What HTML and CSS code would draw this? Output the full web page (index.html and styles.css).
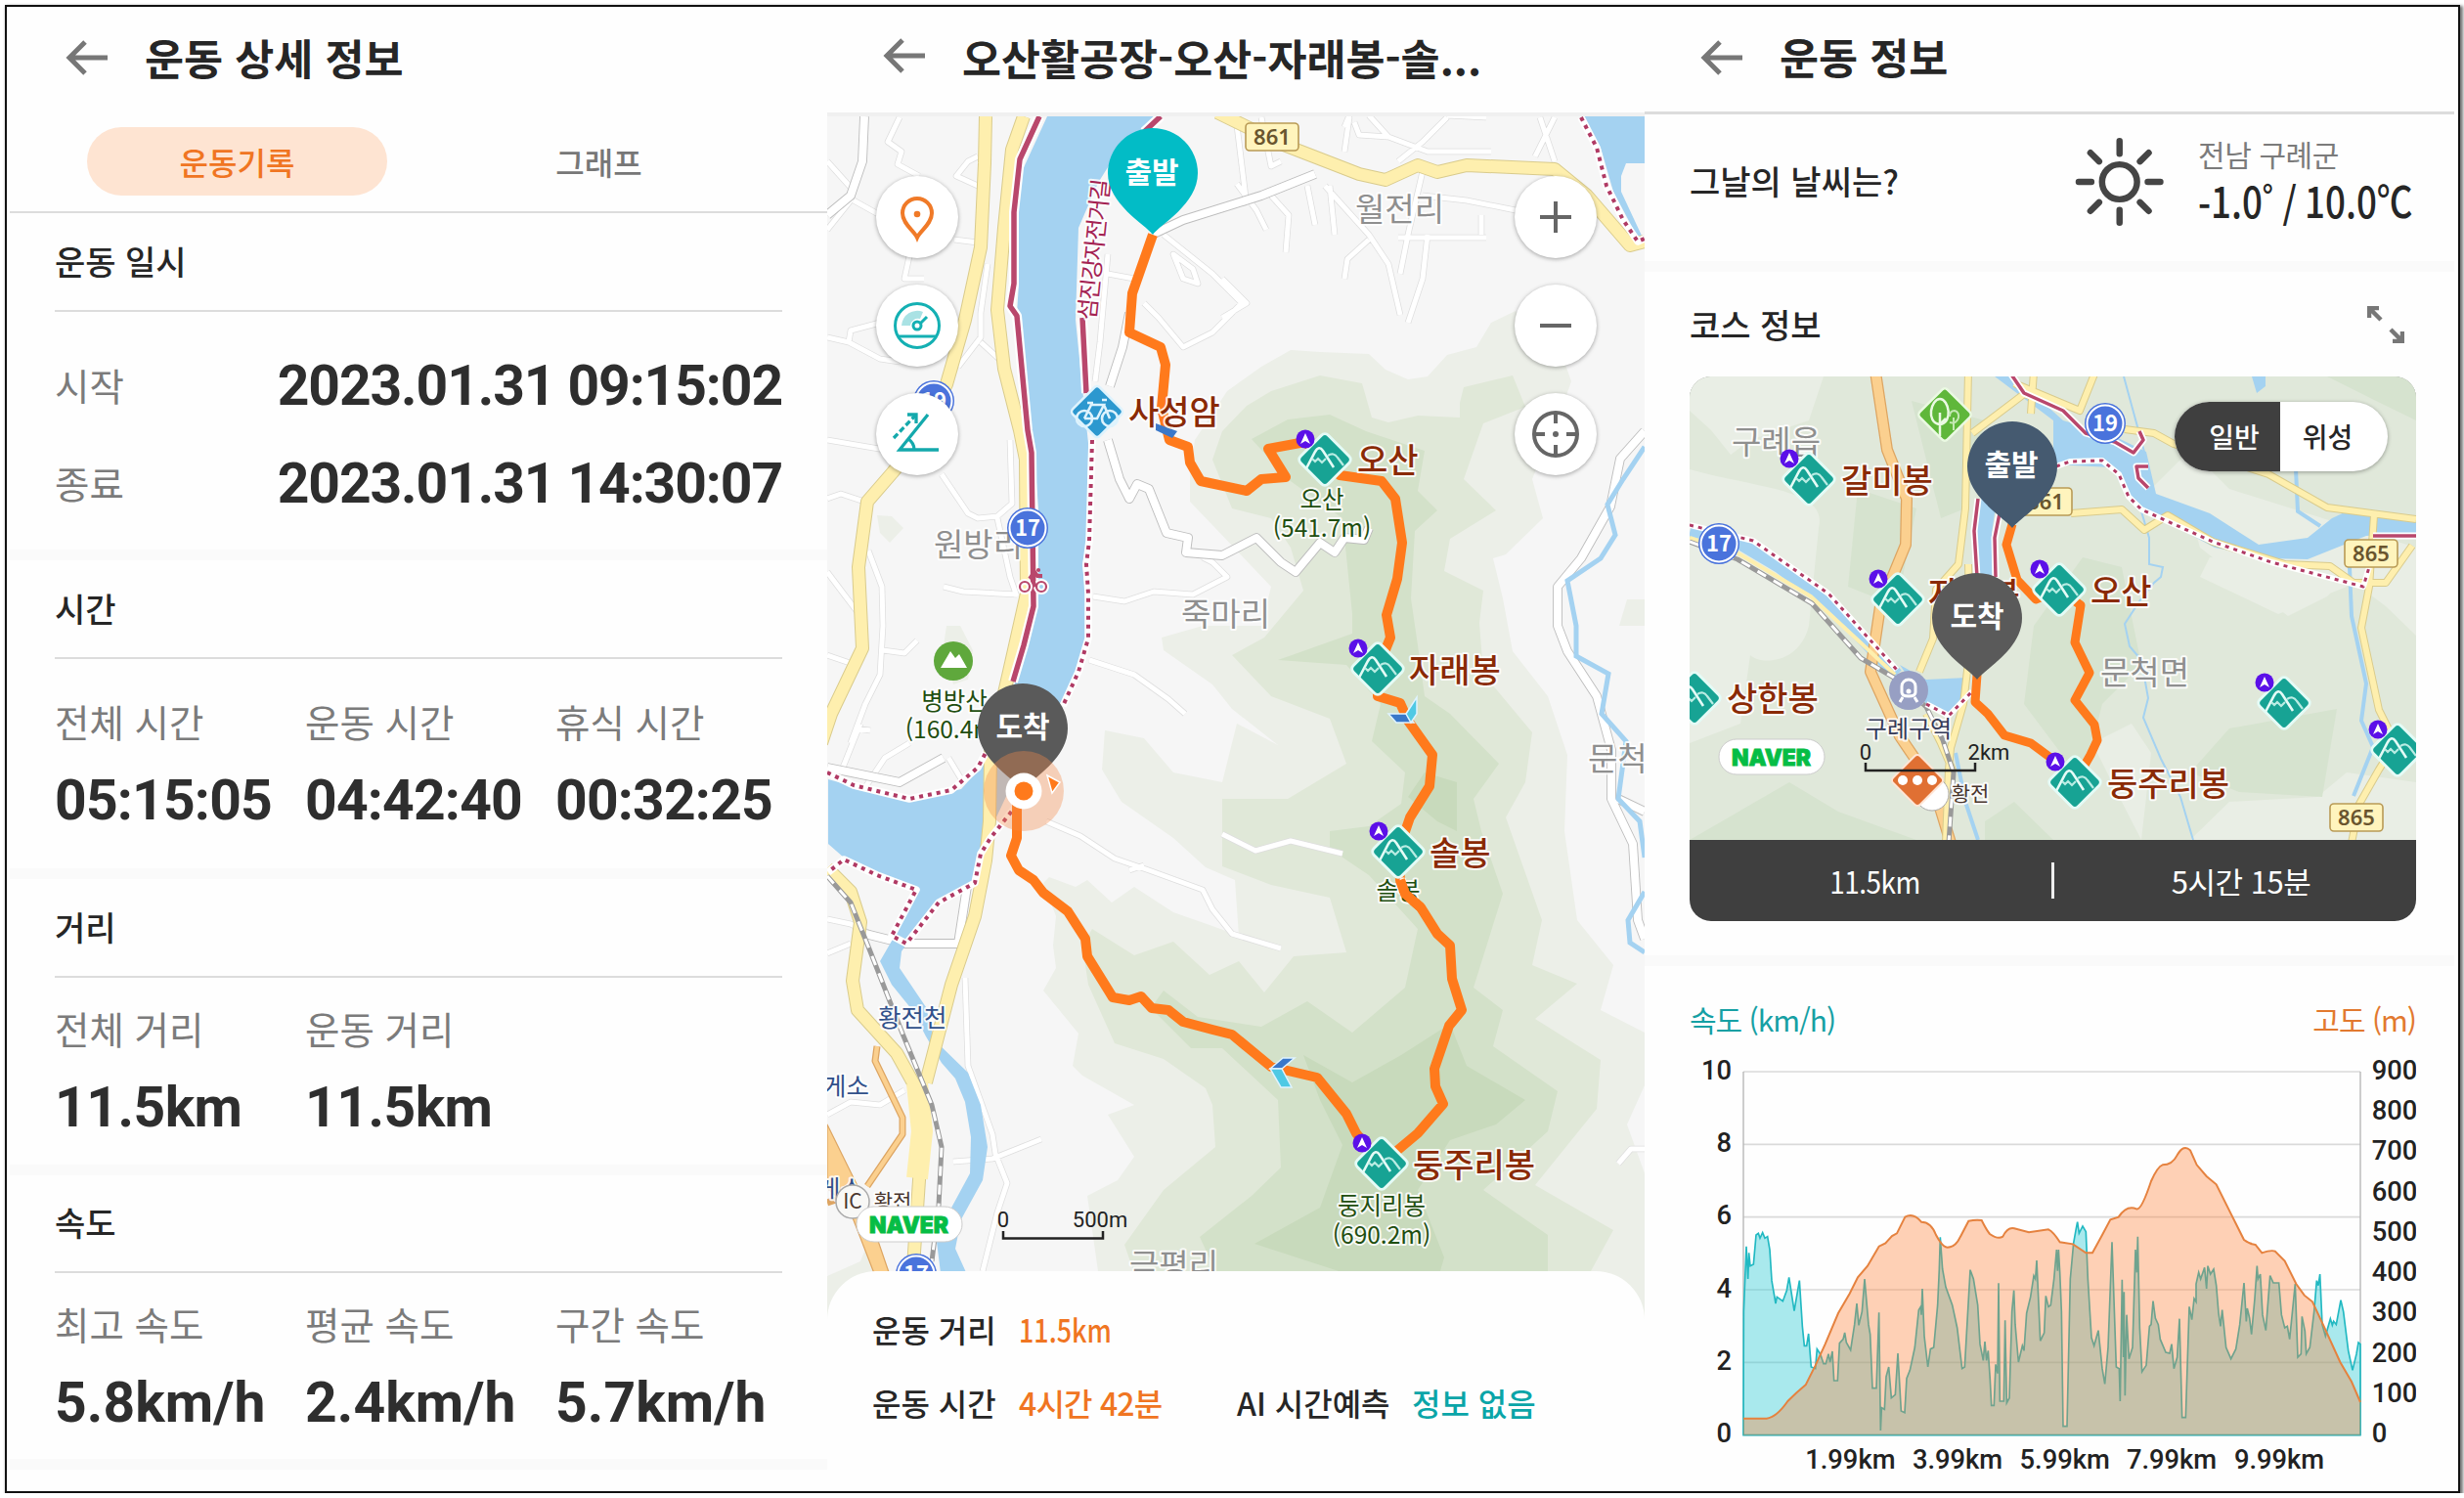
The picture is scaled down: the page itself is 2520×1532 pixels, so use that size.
FILE: index.html
```html
<!DOCTYPE html>
<html lang="ko">
<head>
	<meta charset="utf-8">
	<title>운동 정보</title>
	<link rel="stylesheet" href="styles.css">
</head>
<body>
<svg class="defs" width="0" height="0">
	<defs>
		<symbol id="back" viewBox="0 0 44 36" overflow="visible"><path d="M42 18H4M19 2L3 18L19 34" fill="none" stroke="#777" stroke-width="5"/></symbol>
		<g id="peak">
			<rect x="-20" y="-20" width="40" height="40" rx="5" transform="rotate(45)" fill="#17a394" stroke="#e4fbf6" stroke-width="3"/>
			<path d="M-19 9L-10 -8Q-6 -15 -2 -9L9 8" fill="none" stroke="#e4fbf6" stroke-width="2.600"/>
			<path d="M-13 -1L-10 2L-7 -1L-3 3L1 -1M3 -4Q9 -8 13 -2L19 6" fill="none" stroke="#b9ece3" stroke-width="2.200"/>
			<circle cx="-20" cy="-21" r="9.5" fill="#5b10e8"/>
			<path d="M-20 -27L-15 -16L-20 -19L-25 -16Z" fill="#fff"/>
		</g>
		<path id="pin" d="M0 63C-8 52 -46 32 -46 0A46 46 0 0 1 46 0C46 32 8 52 0 63Z"/>
		<g id="shield">
			<circle r="21" fill="#4a73dc"/>
			<circle r="18.5" fill="none" stroke="#fff" stroke-width="2"/>
		</g>
		<g id="plate"><rect x="-27" y="-14" width="54" height="28" rx="4" fill="#fff4bd" stroke="#b99a55" stroke-width="1.6"/></g>
		<g id="naver">
			<rect x="-54" y="-18" width="108" height="36" rx="18" fill="#fff" stroke="#ccc" stroke-width="1"/>
			<text class="logo" x="-41" y="8.5" textLength="81" lengthAdjust="spacingAndGlyphs">NAVER</text>
		</g>
		<!-- lines drawn twice: casing, then core -->
		<path id="lanes" d="M846 165L873 195L870 205L846 235M846 345L868 350L900 367L920 370M868 350L870 338L900 330M920 120L908 145L922 155L918 168L940 180M873 205L900 220M930 262L925 285L945 285M1000 190L978 180L990 165L1000 160M976 245L1000 248M1010 270L1003 320L1003 345L980 375M1003 350L1025 370M1133 260L1125 350L1120 390M1133 280L1160 285M1190 240L1240 280L1270 310L1255 325L1240 340L1210 355L1185 325L1170 310M1200 260L1220 275L1225 290L1210 285ZM1264 120L1275 210M1290 120L1300 170L1310 165M1375 130L1380 118M1375 155L1380 120M1480 120L1455 145L1430 165M1520 120L1480 118M1400 118L1420 140L1460 155L1525 155M1420 140L1390 138L1385 125M1590 120L1570 160M1575 120L1590 165M1265 188L1285 215L1295 235M1300 200L1318 220L1315 258M1337 190L1345 230M1360 190L1365 240M1355 190L1400 240L1420 270L1432 322M1400 245L1378 265L1375 285M1430 243H1520M1455 175L1440 240L1432 280M1455 200L1500 205L1550 215M1460 240L1455 285L1440 330M1515 220V240M1250 285L1275 310L1250 325M846 450L905 460M846 510L860 505L890 515M963 485L990 525L1000 530L1020 528L1035 515L1033 450M1020 530L1033 590L1040 610M965 600L985 605L1040 608M846 585L880 630M888 563L902 600L903 640L900 690L885 720L870 760M903 665L925 668L938 655M846 670L875 680M876 745L890 747M860 790L880 740M885 805L905 775L930 760M970 775L985 800M1118 610L1150 615L1180 605L1220 608L1255 590L1240 575L1230 570M1114 675L1160 690L1195 715L1212 730M1250 853L1284 870L1320 860L1373 873M1070 840L1105 855L1140 878L1175 890L1230 910L1240 930L1260 955L1310 970M1155 890L1170 885M846 1140L870 1127L900 1130L925 1115M987 1000L990 1090L1015 1160L1018 1180L1030 1210L1020 1240L1005 1300M975 1188L1015 1185L1065 1165M846 940L870 945L890 955M846 975L870 965M1655 1190L1668 1175H1682"/>
		<path id="streets" d="M884 119L882 165L870 200L846 220M1178 240L1210 225L1290 200L1345 178M1155 320L1148 355L1135 395M1133 450L1145 490L1155 510L1163 495L1175 500L1193 545L1215 550L1213 565L1250 568L1285 550L1310 575L1325 585L1350 555L1365 565L1375 550L1395 552L1400 540M846 785L920 800L965 775M1682 441L1657 469L1647 518L1617 571L1593 600V640L1603 666L1633 712L1648 767V817L1670 863L1675 941L1682 960M885 955L925 965L980 965L990 900M1655 817L1682 830"/>
		<path id="roads" d="M1008 119L1007 167L1003 253L987 327L968 393L940 450L913 483L887 513L878 580L882 663L850 730L840 760M1047 119L1035 153L1027 233L1020 317L1027 377L1043 440L1049 470L1050 607L1032 687L1013 770L1012 840L1008 880L997 937L973 1007L947 1107M1245 115L1310 147L1390 178L1417 184L1450 169L1470 176L1500 169L1590 173L1623 200L1667 251L1682 247M846 888L870 912L880 943L872 1003L877 1033L917 1077L937 1113L943 1157L940 1207L933 1310"/>
		<path id="rail" d="M846 896L870 923L890 973L923 1057L953 1130L963 1173L960 1233L953 1290"/>
		<path id="bike" d="M1063 119L1043 163L1037 217V290L1033 313L1040 323L1051 440L1055 463L1057 620L1047 660L1036 697M1187 119L1170 135M1107 325L1111 402"/>
		<path id="trail" d="M1117 450L1114 553L1111 577L1113 607V653L1103 687L1087 722M846 790L873 803L930 817L973 808L1000 785L1008 770M1040 823L1013 857L1003 873L997 903L960 923L927 965L912 957L937 910L897 895L863 879L847 892M1617 120L1633 151L1643 190L1660 225L1675 247L1682 244"/>
		<path id="roads2" d="M2013 380L2010 520L2003 577L1980 603L1977 653L1963 687M2090 408L2070 403L2017 443M2080 380L2077 423M2060 392L2127 420L2143 380M2173 439L2203 443L2223 454L2320 485L2380 519L2471 531M2118 525L2170 521L2193 542L2217 527L2263 554L2337 577L2383 579L2407 596H2440L2467 558M2428 527L2423 600L2415 642L2433 726L2450 760L2433 787L2413 822L2405 862M2013 577L2015 660L2008 720L1995 765L1993 787L1990 862M1970 730L1985 760L1998 790"/>
		<path id="rail2" d="M1728 554L1777 572L1853 617L1903 673L1937 693L1970 723L1987 757L1998 790L1993 862"/>
		<path id="bike2" d="M2055 380L2070 402L2110 420L2133 443L2163 452L2182 463L2192 450L2188 441M2197 477L2185 477L2187 489L2197 499M2427 548H2471M2023 510L2019 543L2022 590M2045 525L2040 550L2041 590"/>
		<path id="trail2" d="M1728 537L1793 553L1870 607L1940 685M1970 720L1993 732L2017 707M2103 477L2117 472L2150 471L2167 485L2177 508L2190 521L2263 554L2323 575L2417 600L2423 580"/>
	</defs>
</svg>

<div class="frame">

	<!-- record detail -->
	<section class="screen record">
		<div class="top">
			<svg class="back"><use href="#back"/></svg>
			<h1>운동 상세 정보</h1>
		</div>
		<div class="tabs">
			<a class="tab on">운동기록</a>
			<a class="tab">그래프</a>
		</div>
		<div class="block when">
			<h2>운동 일시</h2>
			<div class="line"><span class="label">시작</span><b>2023.01.31 09:15:02</b></div>
			<div class="line"><span class="label">종료</span><b>2023.01.31 14:30:07</b></div>
		</div>
		<div class="block time">
			<h2>시간</h2>
			<div class="cols">
				<div><span class="label">전체 시간</span><b>05:15:05</b></div>
				<div><span class="label">운동 시간</span><b>04:42:40</b></div>
				<div><span class="label">휴식 시간</span><b>00:32:25</b></div>
			</div>
		</div>
		<div class="block">
			<h2>거리</h2>
			<div class="cols">
				<div><span class="label">전체 거리</span><b>11.5km</b></div>
				<div><span class="label">운동 거리</span><b>11.5km</b></div>
			</div>
		</div>
		<div class="block speed">
			<h2>속도</h2>
			<div class="cols">
				<div><span class="label">최고 속도</span><b>5.8km/h</b></div>
				<div><span class="label">평균 속도</span><b>2.4km/h</b></div>
				<div><span class="label">구간 속도</span><b>5.7km/h</b></div>
			</div>
		</div>
	</section>

	<!-- course map -->
	<section class="screen course">
		<div class="top">
			<svg class="back"><use href="#back"/></svg>
			<h1>오산활공장-오산-자래봉-솔...</h1>
		</div>
		<div class="mapwrap">
			<svg class="map" viewBox="846 119 836 1240">
				<rect x="846" y="119" width="836" height="1240" fill="#f6f6f6"/>
				<!-- terrain -->
				<path fill="#ecefe8" d="M1217 487L1222 450L1255 400L1290 375L1320 358L1350 360L1400 362L1417 378L1440 388L1460 385L1480 363L1510 355L1525 330L1550 318L1600 370L1607 390L1600 410L1567 490L1578 530L1540 567L1527 571L1537 612L1547 666L1583 712L1603 772L1600 850L1613 941L1650 987L1637 1033L1682 1056V1110L1664 1150L1682 1200V1359H846V1305L880 1290L890 1265L910 1300H1123L1112 1223L1143 1207L1160 1183L1133 1140L1160 1130L1107 1100L1097 1090L1103 1057L1067 1013L1080 990L1077 967L1080 937L1067 903L1073 897L1100 907L1112 900L1137 923L1160 907L1200 933L1240 947L1267 957L1263 900L1233 887L1200 857L1147 820L1127 787L1130 747L1170 755L1200 790L1250 800L1265 740L1307 762L1260 725L1240 700L1190 665L1188 652L1230 640L1290 640L1300 600L1262 560L1217 513Z"/>
				<path fill="#ecefe8" d="M897 527L912 528L924 540L910 555L900 545ZM968 640L982 640L995 665L990 695L975 700L965 660ZM1664 613H1682V640L1656 640Z"/>
				<path fill="#e0e8d8" d="M1240 470L1250 441L1275 415L1300 400L1350 384L1393 392L1403 427L1420 432L1450 425L1493 427L1493 412L1497 396L1547 384L1560 416L1517 433L1497 490L1530 522L1483 551L1477 584L1517 604L1513 637L1517 689L1567 749L1560 800L1540 836L1577 941L1567 987L1613 1006L1570 1042L1637 1084L1633 1134L1570 1212L1650 1258L1627 1300V1359H1180L1150 1273L1190 1217L1243 1173L1240 1130L1233 1113L1190 1083L1140 1067L1113 1007L1107 967L1117 950L1160 977L1200 963L1237 997L1267 983L1293 1015L1323 978L1377 974L1360 918L1300 905L1250 886V817L1317 817L1377 781L1360 735L1300 712L1260 670L1293 652L1333 604L1320 560L1300 530L1260 520Z"/>
				<path fill="#d3e1c9" d="M1280 449L1317 429L1360 424L1397 441L1457 461L1450 502L1470 522L1447 543L1443 612L1450 660L1457 712L1483 730L1533 781L1507 817L1515 850L1537 914L1507 1010L1537 1033L1527 1070L1593 1116L1583 1157L1517 1217L1583 1263V1359H1270L1227 1265L1280 1223L1310 1194L1307 1125L1250 1072L1218 1072L1177 1031L1190 1013L1225 1040L1290 1050L1337 1024L1383 1056L1437 1010L1450 950L1400 895L1360 868V850L1400 845L1433 822L1437 790L1403 758L1412 720L1377 680L1307 675L1383 648L1383 628L1373 530L1317 490Z"/>
				<path fill="#c8dabc" d="M1457 790L1490 800V850L1470 840L1440 815ZM1333 1079L1383 1107L1433 1079L1483 1047L1500 1090L1560 1125L1530 1150L1483 1166L1450 1217L1477 1286L1470 1310H1400L1283 1272L1350 1235L1373 1171L1350 1125Z"/>
				<use href="#lanes" class="lane edge"/>
				<use href="#lanes" class="lane"/>
				<use href="#streets" class="street edge"/>
				<use href="#streets" class="street"/>
				<!-- water -->
				<path fill="#a4d2f1" d="M1071 119L1043 180L1040 217L1042 290L1040 320L1053 440L1057 453L1062 520V607L1053 653L1036 705L1005 783L983 807L930 820L847 797V863L863 877L897 893L937 907L933 917L915 957L900 983L912 1007L933 1033L947 1060L963 1087L977 1103L987 1127L993 1163L992 1200L972 1237L958 1270L963 1310H992L977 1277L983 1247L1005 1207L1010 1173L1003 1130L990 1097L955 1063L947 1030L920 990L922 973L943 943L960 923L997 903L1017 840L1050 770L1087 717L1103 680L1110 653V607L1107 577L1112 553L1113 453L1107 397L1100 327L1103 233L1123 187L1140 160L1187 119Z"/>
				<path fill="#a4d2f1" d="M1618 119H1682V167H1663L1658 180V196L1679 241H1674L1650 196L1637 151Z"/>
				<path fill="none" stroke="#a4d2f1" stroke-width="5" d="M1682 457L1660 490L1644 516L1652 547L1637 571L1603 594L1612 640V671L1645 689L1638 730L1663 758L1655 817L1677 840L1682 877M1682 912L1665 941L1667 964L1682 974"/>
				<!-- roads -->
				<g fill="none" stroke-linejoin="round">
					<path d="M897 1070L895 1085L923 1143V1160L887 1213M846 1230L870 1222" stroke="#dda562" stroke-width="7"/>
					<path d="M897 1070L895 1085L923 1143V1160L887 1213" stroke="#fbd08f" stroke-width="4.5"/>
					<path d="M846 1150L883 1225L912 1310H897L868 1235L846 1215Z" fill="#fbd08f" stroke="#dda562" stroke-width="1.2"/>
				</g>
				<use href="#roads" class="road edge"/>
				<use href="#roads" class="road"/>
				<path d="M938 1108L943 1157L938 1205" fill="none" stroke="#feefae" stroke-width="22"/>
				<use href="#rail" class="rail"/>
				<use href="#rail" class="rail dash"/>
				<!-- bike paths -->
				<use href="#bike" class="bike edge"/>
				<use href="#bike" class="bike"/>
				<use href="#trail" class="trail edge"/>
				<use href="#trail" class="trail"/>
				<!-- course -->
				<path class="route" d="M1179 240L1165 280L1158 300L1155 340L1187 355L1192 373L1188 417L1196 450L1215 457L1217 473L1228 492L1275 502L1290 490L1315 488L1297 459L1335 452L1370 486L1413 492L1427 510L1434 555L1429 592L1418 629L1422 652L1409 684V712L1432 719L1440 737L1465 772L1462 804L1442 836L1430 871L1432 900L1437 914L1453 928L1470 955L1483 967L1485 1001L1495 1033L1482 1049L1467 1093L1468 1111L1476 1129L1450 1159L1413 1190L1387 1159L1377 1139L1347 1102L1300 1091L1260 1058L1240 1053L1210 1045L1195 1033L1178 1031L1167 1019L1155 1023L1138 1020L1112 978L1110 960L1092 932L1067 913L1057 900L1042 890L1034 875L1040 857L1040 815"/>
				<g stroke="#dff3ff" stroke-width="1.500">
					<path d="M1420 730H1438L1446 739H1428Z" fill="#3a78c9"/><path d="M1438 730L1449 713V730L1443 739Z" fill="#4fc9e4"/>
					<path d="M1299 1093L1312 1082H1324L1311 1093Z" fill="#3a78c9"/><path d="M1299 1093H1311L1321 1112H1310Z" fill="#4fc9e4"/>
				</g>
				<path d="M1182 433L1204 441L1199 448L1182 440Z" fill="#3a78c9"/>
				<!-- names -->
				<g class="area">
					<text x="955" y="569">원방리</text><text x="1386" y="226">월전리</text><text x="1208" y="640">죽마리</text><text x="1624" y="788">문척</text><text x="1155" y="1306">금평리</text>
				</g>
				<g class="hill">
					<text x="1352" y="520">오산</text><text x="1352" y="549">(541.7m)</text><text x="1430" y="920">솔봉</text><text x="1413" y="1242">둥지리봉</text><text x="1413" y="1272">(690.2m)</text><text x="976" y="726">병방산</text><text x="976" y="755">(160.4m)</text>
				</g>
				<path d="M1432 900L1437 914L1453 928" class="route"/>
				<g class="blue"><text x="898" y="1050">황전천</text><text x="842" y="1120">게소</text><text x="836" y="1225">게스</text></g>
				<text class="bikename" transform="translate(1120 328) rotate(-84)" textLength="145">섬진강자전거길</text>
				<circle cx="872" cy="1229" r="17" fill="#f8f8f6" stroke="#aaa" stroke-width="1.5"/><text class="ic" x="872" y="1236">IC</text>
				<text class="ic halo" x="913" y="1236">황전</text>
				<circle cx="975" cy="676" r="20" fill="#5fa83c"/><path d="M962 683L972 666L977 673L981 669L989 683Z" fill="#fff"/>
				<g fill="none" stroke="#fff" stroke-width="6"><circle cx="1048" cy="600" r="5"/><circle cx="1065" cy="600" r="5"/></g>
				<g fill="none" stroke="#b9476c" stroke-width="2.2"><circle cx="1048" cy="600" r="5"/><circle cx="1065" cy="600" r="5"/><path d="M1053 592L1058 585L1061 589H1066M1055 591L1059 600" stroke-width="4"/><circle cx="1062" cy="583" r="1"/></g>
				<use href="#plate" x="1301" y="140"/><text class="no" x="1301" y="148">861</text>
				<use href="#shield" x="1051" y="540"/><text class="route-no" x="1051" y="548">17</text>
				<use href="#shield" x="955" y="410"/><text class="route-no" x="955" y="418">19</text>
				<use href="#shield" x="937" y="1303"/><text class="route-no" x="937" y="1311">17</text>
				<!-- markers -->
				<g transform="translate(1122 421)"><rect x="-19.5" y="-19.5" width="39" height="39" rx="4" transform="rotate(45)" fill="#2c98cf" stroke="#def3fd" stroke-width="2.5"/>
					<g fill="none" stroke="#def3fd" stroke-width="2.6"><circle cx="-13" cy="7" r="8"/><circle cx="13" cy="7" r="8"/><path d="M-13 7L-6 -7H7L0 7H-13M7 -7L13 7M-10 -9H-4M5 -12H10"/></g></g>
				<use href="#peak" x="1355" y="470"/><use href="#peak" x="1409" y="684"/><use href="#peak" x="1430" y="871"/><use href="#peak" x="1413" y="1190"/>
				<g class="peakname"><text x="1154" y="434">사성암</text><text x="1388" y="483">오산</text><text x="1441" y="698">자래봉</text><text x="1462" y="885">솔봉</text><text x="1445" y="1204">둥주리봉</text></g>
				<use href="#pin" x="1179" y="177" fill="#02bcc6"/><text class="pin-text" x="1178" y="187">출발</text>
				<use href="#pin" x="1046" y="745" fill="#5a5a5a"/><text class="pin-text" x="1046" y="754">도착</text>
				<circle cx="1047" cy="809" r="41" fill="#f58a4a" fill-opacity=".36"/>
				<circle cx="1047" cy="809" r="18.5" fill="#fff"/><circle cx="1047" cy="809" r="9.5" fill="#ff7a1c"/>
				<path d="M1071 793L1084 800L1076 811Z" fill="#ff7a1c" stroke="#fff" stroke-width="1.5"/>
				<use href="#naver" x="930" y="1252"/>
				<g class="scale"><text x="1026" y="1255">0</text><text x="1125" y="1255">500m</text><path d="M1026 1259V1266.500H1128V1259"/></g>
			</svg>
			<div class="tools left">
				<span class="tool"><svg viewBox="-30 -30 60 60"><path d="M0 21C-3 14 -15 7 -15 -4A15 15 0 0 1 15 -4C15 7 3 14 0 21Z" fill="none" stroke="#f07a28" stroke-width="4"/><circle cy="-3" r="3.3" fill="#f07a28"/></svg></span>
				<span class="tool"><svg viewBox="-30 -30 60 60"><g fill="none" stroke="#14b0b3" stroke-width="3"><circle r="22.500"/><path d="M-20 11H20M3 -2L10 -9"/><circle r="4"/></g><path d="M-16 0A16 16 0 0 1 6 -14L3 -7A8 8 0 0 0 -7 0Z" fill="#a9e2e4"/></svg></span>
				<span class="tool"><svg viewBox="-30 -30 60 60"><g fill="none" stroke="#14a9ac" stroke-width="3.300"><path d="M11 -20L-18 16H22M-9 5Q-3 9 -3 16"/><path d="M-24 4L-2 -19" stroke-dasharray="6 3"/><path d="M-10 -20H-1V-11"/></g></svg></span>
			</div>
			<div class="tools right">
				<span class="tool"><svg viewBox="-30 -30 60 60"><path d="M-16 0H16M0 -16V16" stroke="#666" stroke-width="4"/></svg></span>
				<span class="tool"><svg viewBox="-30 -30 60 60"><path d="M-16 0H16" stroke="#666" stroke-width="4"/></svg></span>
				<span class="tool"><svg viewBox="-30 -30 60 60"><g fill="none" stroke="#666" stroke-width="4"><circle r="22"/><path d="M0 -22V-11M0 22V11M-22 0H-11M22 0H11"/></g><circle r="3" fill="#666"/></svg></span>
			</div>
		</div>
		<div class="sheet">
			<p><span>운동 거리</span><em class="km">11.5km</em></p>
			<p><span>운동 시간</span><em class="w">4시간 42분</em><span class="ai">AI 시간예측</span><i>정보 없음</i></p>
		</div>
	</section>

	<!-- summary -->
	<section class="screen info">
		<div class="top">
			<svg class="back"><use href="#back"/></svg>
			<h1>운동 정보</h1>
		</div>
		<div class="weather">
			<h2>그날의 날씨는?</h2>
			<svg class="sun" viewBox="-46 -46 92 92"><g fill="none" stroke="#454545" stroke-width="6.500" stroke-linecap="round"><circle r="18"/><path d="M0 -42V-29M0 42V29M-42 0H-29M42 0H29M-30 -30L-21 -21M30 -30L21 -21M-30 30L-21 21M30 30L21 21"/></g></svg>
			<div class="temps"><span>전남 구례군</span><strong>-1.0˚ / 10.0℃</strong></div>
		</div>
		<div class="coursehead">
			<h2>코스 정보</h2>
			<svg class="expand" viewBox="0 0 38 38"><path d="M2 12V2H12M3 3L14 14M36 26V36H26M35 35L24 24" fill="none" stroke="#777" stroke-width="4.500"/></svg>
		</div>
		<div class="card">
			<svg class="minimap" viewBox="1728 385 743 474">
				<rect x="1728" y="385" width="743" height="474" fill="#e0e8da"/>
				<path fill="#e9eee5" d="M1728 385H1865L1850 430L1790 450L1770 465L1750 440L1728 420ZM1728 480C1800 500 1870 500 1860 540L1850 640C1840 680 1800 680 1790 670L1780 740L1728 760ZM2190 510L2240 525L2250 560L2340 630L2380 610L2400 590L2440 620L2471 650V560L2280 500L2240 460ZM2380 560L2320 575L2260 570L2250 590L2330 628L2400 600ZM2140 760L2180 740L2200 770L2190 859L2170 820ZM2240 859L2280 820L2370 815L2400 790L2471 800V859Z"/>
				<path fill="#d6e3cf" d="M1955 410L2030 430L2010 520L1985 530L1970 470ZM1900 500L1960 520L1940 620L1890 600ZM2130 570L2170 580L2190 680L2150 720L2130 800L2070 720L2080 640ZM2240 790L2280 745L2390 725L2375 815L2290 810ZM1728 859L1830 800L1880 830L1960 859ZM2380 385H2471V430L2430 410ZM2030 840L2060 820L2100 859H2030Z"/>
				<g fill="none" stroke="#a4d2f1">
					<path d="M2172 385L2193 462M2190 523L2198 550V577L2212 580L2210 590L2203 596L2188 615L2173 638L2178 661L2190 675L2197 714L2192 734L2210 776L2230 815L2243 859" stroke-width="2"/>
					<path d="M2403 580L2405 630L2420 699L2415 737L2427 764L2407 814M2348 480L2350 523L2373 538M2000 770L2010 820L2023 859" stroke-width="4"/>
					<path d="M1728 545L1780 556L1820 580L1870 617L1940 690" stroke-width="13"/>
					<path d="M2034 510L2029 545L2030 600" stroke-width="16"/>
				</g>
				<path fill="#a4d2f1" d="M2040 385H2060L2110 430L2160 445L2195 462L2205 505L2260 525L2310 557L2360 550L2385 530L2400 523L2471 533V545L2420 548L2360 572L2320 571L2265 560L2190 520L2175 508L2160 478L2100 475V430ZM1943 680L1970 695L2012 693V715L1997 730L1970 720ZM2303 385H2317V395L2308 402Z"/>
				<g fill="none" stroke-linejoin="round">
					<path d="M1918 380L1930 460L1950 510L1949 557L1923 620L1913 687L1943 753L1977 803L1995 862" stroke="#dda562" stroke-width="12"/>
					<path d="M1918 380L1930 460L1950 510L1949 557L1923 620L1913 687L1943 753L1977 803L1995 862" stroke="#fbd08f" stroke-width="9.500"/>
					<path d="M1728 550L1776 565L1852 610L1938 690" stroke="#feefae" stroke-width="4"/>
				</g>
				<g class="thin">
					<use href="#roads2" class="road edge"/>
					<use href="#roads2" class="road"/>
					<use href="#rail2" class="rail"/>
					<use href="#rail2" class="rail dash"/>
					<use href="#bike2" class="bike edge"/>
					<use href="#bike2" class="bike"/>
					<use href="#trail2" class="trail edge"/>
					<use href="#trail2" class="trail"/>
					<path class="route" d="M2058 536L2052 557L2063 593L2082 613L2106 603L2128 619L2122 657L2137 688L2122 716L2142 741L2145 757L2138 772L2122 800L2100 777L2077 760L2050 752L2033 730L2020 718L2022 690"/>
				</g>
				<g class="area"><text x="1771" y="464">구례읍</text><text x="2148" y="700">문척면</text></g>
				<use href="#plate" x="2092" y="513"/><text class="no" x="2092" y="521">861</text>
				<use href="#plate" x="2425" y="566"/><text class="no" x="2425" y="574">865</text>
				<use href="#plate" x="2410" y="836"/><text class="no" x="2410" y="844">865</text>
				<use href="#shield" x="1758" y="556"/><text class="route-no" x="1758" y="564">17</text>
				<use href="#shield" x="2153" y="433"/><text class="route-no" x="2153" y="441">19</text>
				<circle cx="1952" cy="706" r="20" fill="#979fc3"/><g fill="none" stroke="#fff" stroke-width="3"><path d="M1945 708V702A7 7 0 0 1 1959 702V708Q1959 712 1952 712Q1945 712 1945 708M1946 713L1943 718M1958 713L1961 718"/></g><circle cx="1952" cy="707" r="2.500" fill="#fff"/>
				<circle cx="1976" cy="812" r="17" fill="#fff" stroke="#aaa"/>
				<rect x="-19.500" y="-19.500" width="39" height="39" rx="4" transform="translate(1961 798) rotate(45)" fill="#e07033" stroke="#ffe5d5" stroke-width="2"/><g fill="#fff"><circle cx="1946" cy="798" r="5"/><circle cx="1961" cy="798" r="5"/><circle cx="1976" cy="798" r="5"/></g>
				<g transform="translate(1989 424)"><rect x="-20" y="-20" width="40" height="40" rx="4" transform="rotate(45)" fill="#5fb73a" stroke="#eaf9e2" stroke-width="2.500"/><path d="M-5 22V-2M-5 10C-20 8 -14 -16 -5 -16C4 -16 9 8 -5 10M-5 10L1 4" fill="none" stroke="#eaf9e2" stroke-width="2.500"/><path d="M5 8C15 11 17 -3 10 -4Q5 -4 5 2M9 16V3" fill="none" stroke="#c4e8b3" stroke-width="2"/></g>
				<use href="#peak" x="1850" y="490"/><use href="#peak" x="1941" y="613"/><use href="#peak" x="1733" y="714"/><use href="#peak" x="2106" y="603"/><use href="#peak" x="2122" y="800"/><use href="#peak" x="2336" y="719"/><use href="#peak" x="2452" y="767"/>
				<g class="peakname"><text x="1883" y="504">갈미봉</text><text x="1972" y="620">자래봉</text><text x="1766" y="727">상한봉</text><text x="2138" y="617">오산</text><text x="2155" y="814">둥주리봉</text></g>
				<text class="station" x="1952" y="754">구례구역</text><text class="ic halo" x="2015" y="819">황전</text>
				<use href="#pin" x="2058" y="477" fill="#455a70"/><text class="pin-text" x="2057" y="486">출발</text>
				<use href="#pin" x="2022" y="632" fill="#5a5a5a"/><text class="pin-text" x="2022" y="641">도착</text>
				<use href="#naver" x="1812" y="774"/>
				<g class="scale"><text x="1908" y="777">0</text><text x="2034" y="777">2km</text><path d="M1908 780V788H2020V780"/></g>
			</svg>
			<div class="switch"><span class="on">일반</span><span>위성</span></div>
			<div class="total"><span class="dist"><i>11.5km</i></span><span>5시간 15분</span></div>
		</div>
		<div class="graph">
			<div class="legend"><span>속도 (km/h)</span><span class="alt">고도 (m)</span></div>
			<!-- three units to the pixel -->
			<svg class="chart" viewBox="54 180 2229 1320">
				<path d="M219 264H2112M219 487H2112M219 710H2112M219 933H2112M219 1156H2112M219 1379H2112" stroke="#dadada" stroke-width="5"/>
				<path d="M219 264V1379M2112 264V1379" stroke="#b5b5b5" stroke-width="4"/>
				<path id="speed" fill="#2bcbd4" fill-opacity=".4" stroke="#22b9c2" stroke-width="5" d="M219 1379L220 1000L228 800L233 900L236 820L240 860L250 855L258 765L265 760L270 775L278 758L285 775L293 770L300 810L306 905L318 975L322 955L340 968L352 935L359 895L375 998L391 905L400 1045L406 1105H413L419 1068L427 1170L440 1175L445 1115L455 1130L465 1160L472 1160L480 1130L485 1155L492 1122L497 1212H508L514 1097L525 1085L530 1065L535 1095L548 1118L560 1040L567 975L573 1042L583 1000L591 900L603 1040L608 1070L615 1235H627L635 1003L640 1365L643 1295L652 1300L657 1200L665 1170L673 1265L685 1255L693 1128L703 1305L714 1310L720 1205L730 1180L745 1110L757 995L763 985L765 1010L768 930L774 1075L785 1170L793 1115L803 1110L815 980L820 870L823 772L830 870L840 925L860 980L875 1050L890 1175L898 1170L915 872L925 900L938 980L945 1100L955 1150L960 1092L965 1150L970 1120L976 1210L980 1288H988L993 1162L999 1190L1002 913L1006 1275H1018L1022 1027L1027 1280L1035 1265L1043 1000L1049 935L1053 1040L1063 1155L1075 1105L1080 1120L1088 1005L1100 955L1110 890L1115 900L1119 843L1130 1090L1142 1065L1147 952L1155 985L1162 980L1172 900L1180 810L1183 875L1186 810L1190 880L1195 1000L1200 1352H1212L1222 900L1232 790L1240 745L1244 725L1249 760L1260 738L1270 755L1276 900L1287 1080L1295 1105L1308 1058L1320 1175L1328 1222L1338 1110L1350 787L1363 1170L1372 1175L1375 1275L1381 902L1385 1140L1387 940L1390 1258L1395 1010L1402 1145L1413 1110L1422 810L1426 880L1429 770L1435 1050L1442 1185L1455 1165L1465 1045L1470 1040L1476 968L1483 1020L1492 1040L1498 1085L1515 1125L1527 1128L1533 1100L1540 1175L1550 1140L1557 1022L1565 1325H1576L1587 985L1595 1025L1602 960L1608 970V915L1616 880L1622 900L1634 865L1640 930L1644 860L1652 885L1662 870L1670 920L1677 1005L1683 1045L1688 995L1700 1110L1715 1145L1730 1115L1742 1040L1755 912L1762 1030L1765 990L1772 1020L1778 1070L1788 960L1795 860L1798 900L1805 885L1812 1010L1822 1058L1835 890L1845 912H1862L1870 1010L1880 1050L1888 1045L1895 1085L1912 915L1920 1140L1930 1130L1933 1015L1942 1060L1946 1130L1957 1110L1970 1000L1978 905L1983 920L1988 885L1995 1040L2005 1075L2020 1022L2026 1042L2030 1030L2038 1040L2052 965L2060 1000L2075 1120L2088 1180L2100 1130L2106 1095L2112 1100V1379Z"/>
				<path fill="#ff7c2e" fill-opacity=".35" d="M219 1328H290Q320 1325 355 1275Q380 1250 410 1225L440 1165L470 1100L510 1005L545 945L570 895L600 860L635 800L655 790L675 768L690 760L715 710Q740 695 765 725Q795 725 810 765Q830 803 845 803Q870 803 885 770L910 722Q930 718 950 720Q965 750 975 762Q1000 780 1015 770Q1030 740 1050 745L1095 757L1155 748Q1170 755 1190 787L1230 793L1270 820H1290L1320 765L1345 718L1370 710Q1395 672 1425 685Q1440 690 1470 600Q1490 555 1505 550Q1535 550 1550 520Q1570 485 1590 505L1610 550L1640 585L1670 610L1715 700L1755 780Q1770 792 1790 795L1810 820Q1840 810 1850 815L1880 845L1915 915L1940 950L1965 970L2000 1045L2050 1155L2085 1215L2112 1278V1379H219Z"/>
				<path fill="none" stroke="#e5823f" stroke-width="6" d="M219 1328H290Q320 1325 355 1275Q380 1250 410 1225L440 1165L470 1100L510 1005L545 945L570 895L600 860L635 800L655 790L675 768L690 760L715 710Q740 695 765 725Q795 725 810 765Q830 803 845 803Q870 803 885 770L910 722Q930 718 950 720Q965 750 975 762Q1000 780 1015 770Q1030 740 1050 745L1095 757L1155 748Q1170 755 1190 787L1230 793L1270 820H1290L1320 765L1345 718L1370 710Q1395 672 1425 685Q1440 690 1470 600Q1490 555 1505 550Q1535 550 1550 520Q1570 485 1590 505L1610 550L1640 585L1670 610L1715 700L1755 780Q1770 792 1790 795L1810 820Q1840 810 1850 815L1880 845L1915 915L1940 950L1965 970L2000 1045L2050 1155L2085 1215L2112 1278"/>
				<g class="axis end"><text x="183" y="287">10</text><text x="183" y="510">8</text><text x="183" y="733">6</text><text x="183" y="956">4</text><text x="183" y="1179">2</text><text x="183" y="1402">0</text></g>
				<g class="axis"><text x="2147" y="287">900</text><text x="2147" y="411">800</text><text x="2147" y="535">700</text><text x="2147" y="659">600</text><text x="2147" y="783">500</text><text x="2147" y="907">400</text><text x="2147" y="1030">300</text><text x="2147" y="1155">200</text><text x="2147" y="1278">100</text><text x="2147" y="1402">0</text></g>
				<g class="axis mid"><text x="547" y="1483">1.99km</text><text x="876" y="1483">3.99km</text><text x="1205" y="1483">5.99km</text><text x="1533" y="1483">7.99km</text><text x="1863" y="1483">9.99km</text></g>
			</svg>
		</div>
	</section>
</div>
</body>
</html>
```
FILE: styles.css
```css
html, body { margin: 0; padding: 0; }
body { background-color: #fff; font-family: "Noto Sans CJK KR", sans-serif; color: #262626; }
h1, h2, p { margin: 0; font-weight: 500; }
svg { display: block; }
.defs { position: absolute; }

.frame {
	box-sizing: border-box;
	width: 2511px;
	height: 1522px;
	margin: 5px 0 0 5px;
	padding-left: 3px;
	border: 2px solid #111;
	box-shadow: 2px 2px 3px 1px #777;
	display: grid;
	grid-template-columns: 836px 836px 828px;
	background-color: #fefefe;
	overflow: hidden;
}
.screen { height: 1518px; overflow: hidden; }

/* title bars */
.top { box-sizing: border-box; height: 108px; display: flex; align-items: center; padding-left: 58px; }
.top h1 { font-size: 43.5px; font-weight: 700; line-height: 60px; padding-bottom: 5px; }
.back { width: 44px; height: 36px; margin: 0 36px 4px 0; overflow: visible; }
h2 { font-size: 34px; }

/* record */
.tabs { display: flex; gap: 63px; padding: 15px 0 16px 79px; border-bottom: 2px solid #dcdcdc; }
.tab { width: 307px; height: 70px; border-radius: 35px; text-align: center; font-size: 32px; font-weight: 500; line-height: 70px; color: #777; }
.tab.on { background-color: #fee4d2; color: #f07522; }
.block { box-sizing: border-box; height: 303px; padding: 0 46px; border-bottom: 11px solid #fafafa; }
.block h2 { height: 99px; line-height: 98px; border-bottom: 2px solid #dcdcdc; }
.when { height: 355px; }
.time { height: 326px; }
.time .cols { padding-top: 26px; }
.speed { height: 301px; }
.speed h2 { height: 98px; line-height: 96px; }
.label { font-size: 38.5px; font-weight: 400; color: #7b7b7b; line-height: 74px; padding-bottom: 4px; display: block; }
.block b { font-family: Roboto, sans-serif; font-size: 57px; line-height: 82px; letter-spacing: -1.1px; color: #2e2e2e; display: block; white-space: nowrap; }
.time b { letter-spacing: -.8px; }
.block:not(.when):not(.time) b { letter-spacing: -.5px; }
.record .speed b { letter-spacing: .1px !important; }
.line { display: flex; justify-content: space-between; align-items: center; height: 100px; }
.line:nth-child(2) { padding-top: 26px; }
.cols { display: grid; grid-template-columns: 256px 256px 256px; padding-top: 14px; }

/* course map */
.course .top { height: 112px; padding-bottom: 4px; border-bottom: 4px solid #f0f0f0; }
.course .top h1 { padding-bottom: 1px; }
.mapwrap { position: relative; height: 1181px; }
.map { width: 836px; height: 1240px; }
.tools { position: absolute; top: 61px; display: flex; flex-direction: column; gap: 27px; }
.tools.left { left: 50px; }
.tools.right { right: 49px; }
.tool { width: 84px; height: 84px; border-radius: 50%; background-color: #fff; box-shadow: 0 1px 4px rgba(0, 0, 0, .35); display: flex; align-items: center; justify-content: center; }
.tool svg { width: 60px; height: 60px; }
.sheet { position: relative; height: 225px; box-sizing: border-box; padding: 22px 46px; border-radius: 50px 50px 0 0; background-color: #fefefe; }
.sheet p { display: flex; height: 75px; line-height: 75px; font-size: 32px; }
.sheet span { width: 150px; }
.sheet em { font-style: normal; color: #f07522; letter-spacing: -.8px; }
.sheet i { font-style: normal; color: #0aa5a8; }
.sheet em.w { width: 223px; }
.sheet em.km { letter-spacing: 0; transform: scaleX(.84); transform-origin: left; }
.sheet .ai { width: 179px; }

.lane, .street, .road, .rail, .bike, .trail { fill: none; stroke-linejoin: round; }
.lane { stroke: #fff; stroke-width: 5; }
.lane.edge { stroke: #dedede; stroke-width: 6.5; }
.street { stroke: #fff; stroke-width: 8; }
.street.edge { stroke: #bdbdbd; stroke-width: 9.8; }
.road { stroke: #feefae; stroke-width: 12; }
.road.edge { stroke: #d9cb8c; stroke-width: 14; }
.rail { stroke: #999; stroke-width: 5; }
.rail.dash { stroke: #fff; stroke-width: 3; stroke-dasharray: 10 9; }
.bike { stroke: #b9476c; stroke-width: 5.5; }
.bike.edge { stroke: #fff; stroke-width: 10; }
.trail { stroke: #b03a64; stroke-width: 4; stroke-dasharray: 4 5; }
.trail.edge { stroke: #fff; stroke-width: 7.5; stroke-dasharray: none; }
.route { fill: none; stroke: #ff7a1c; stroke-width: 10; stroke-linejoin: round; }
.thin .road { stroke-width: 6; }
.thin .road.edge { stroke-width: 8; }
.thin .bike { stroke-width: 3.5; }
.thin .bike.edge { stroke-width: 7; }
.thin .trail { stroke-width: 3; }
.thin .trail.edge { stroke-width: 6; }
.thin .route { stroke-width: 9; }

.area { font-size: 33px; fill: #8f8f8f; }
.hill { font-size: 24.5px; fill: #1f4e10; text-anchor: middle; }
.blue { font-size: 25.5px; fill: #31508a; }
.peakname { font-size: 34px; font-weight: 500; fill: #8a2a05; }
.area, .hill, .blue, .peakname, .halo, .bikename, .station { paint-order: stroke; stroke: #fff; stroke-width: 4px; stroke-linejoin: round; stroke-opacity: .85; }
.bikename { font-size: 24px; fill: #a42353; }
.ic { font-size: 21px; fill: #49352d; text-anchor: middle; }
.station { font-size: 24px; fill: #343a58; text-anchor: middle; }
.no { font-family: "Noto Sans", sans-serif; font-size: 22px; font-weight: 600; fill: #69552e; text-anchor: middle; }
.route-no { font-size: 22px; font-weight: 700; fill: #fff; text-anchor: middle; }
.pin-text { font-size: 30px; font-weight: 700; fill: #fff; text-anchor: middle; }
.logo { font-family: Inter, sans-serif; font-size: 23px; font-weight: 900; fill: #06bd45; stroke: #06bd45; stroke-width: .8px; }
.scale text { font-family: Roboto, sans-serif; font-size: 22px; fill: #222; text-anchor: middle; }
.scale path { fill: none; stroke: #222; stroke-width: 2.5; }

/* summary */
.info .top { height: 110px; border-bottom: 3px solid #dcdcdc; }
.weather { box-sizing: border-box; display: flex; align-items: center; height: 161px; padding: 0 40px 12px 46px; border-bottom: 11px solid #fafafa; }
.weather h2 { width: 396px; padding-bottom: 3px; }
.sun { width: 92px; height: 92px; }
.temps { width: 222px; margin-left: 35px; padding-bottom: 8px; white-space: nowrap; }
.temps span { display: block; font-size: 30px; line-height: 44px; color: #7b7b7b; letter-spacing: -.4px; }
.temps strong { display: block; font-size: 44px; font-weight: 500; line-height: 50px; transform: scaleX(.835); transform-origin: left; }
.coursehead { display: flex; justify-content: space-between; align-items: center; height: 107px; padding: 0 51px 0 46px; }
.expand { width: 38px; height: 38px; }
.card { position: relative; width: 743px; height: 557px; margin-left: 46px; border-radius: 22px; overflow: hidden; background-color: #3f3f3f; }
.minimap { width: 743px; height: 474px; }
.switch { position: absolute; top: 26px; right: 29px; width: 218px; height: 71px; border-radius: 36px; overflow: hidden; background-color: #fff; box-shadow: 0 1px 4px rgba(0, 0, 0, .35); display: flex; font-size: 28px; font-weight: 500; line-height: 71px; }
.switch span { width: 97px; padding-right: 12px; text-align: center; }
.switch .on { width: 94px; padding: 0 0 0 14px; background-color: #3f3f3f; color: #fff; }
.total { display: flex; height: 83px; align-items: center; color: #fff; font-size: 31px; letter-spacing: -.5px; }
.total span { flex: 1; text-align: center; line-height: 37px; }
.total .dist { flex: none; width: 370px; padding-left: 0; }
.total i { display: inline-block; font-style: normal; transform: translateX(5px) scaleX(.9); }
.total span + span { border-left: 3px solid #eee; padding-left: 12px; }
.graph { margin-top: 35px; border-top: 11px solid #fafafa; padding-left: 46px; }
.legend { display: flex; justify-content: space-between; width: 743px; height: 52px; padding-top: 28px; font-size: 30px; letter-spacing: -1px; line-height: 52px; color: #16a0a4; }
.legend .alt { color: #e2792f; }
.chart { width: 743px; height: 440px; }
.axis { font-family: Roboto, sans-serif; font-size: 82px; font-weight: 500; fill: #222; }
.axis.end { text-anchor: end; }
.axis.mid { text-anchor: middle; }
```
